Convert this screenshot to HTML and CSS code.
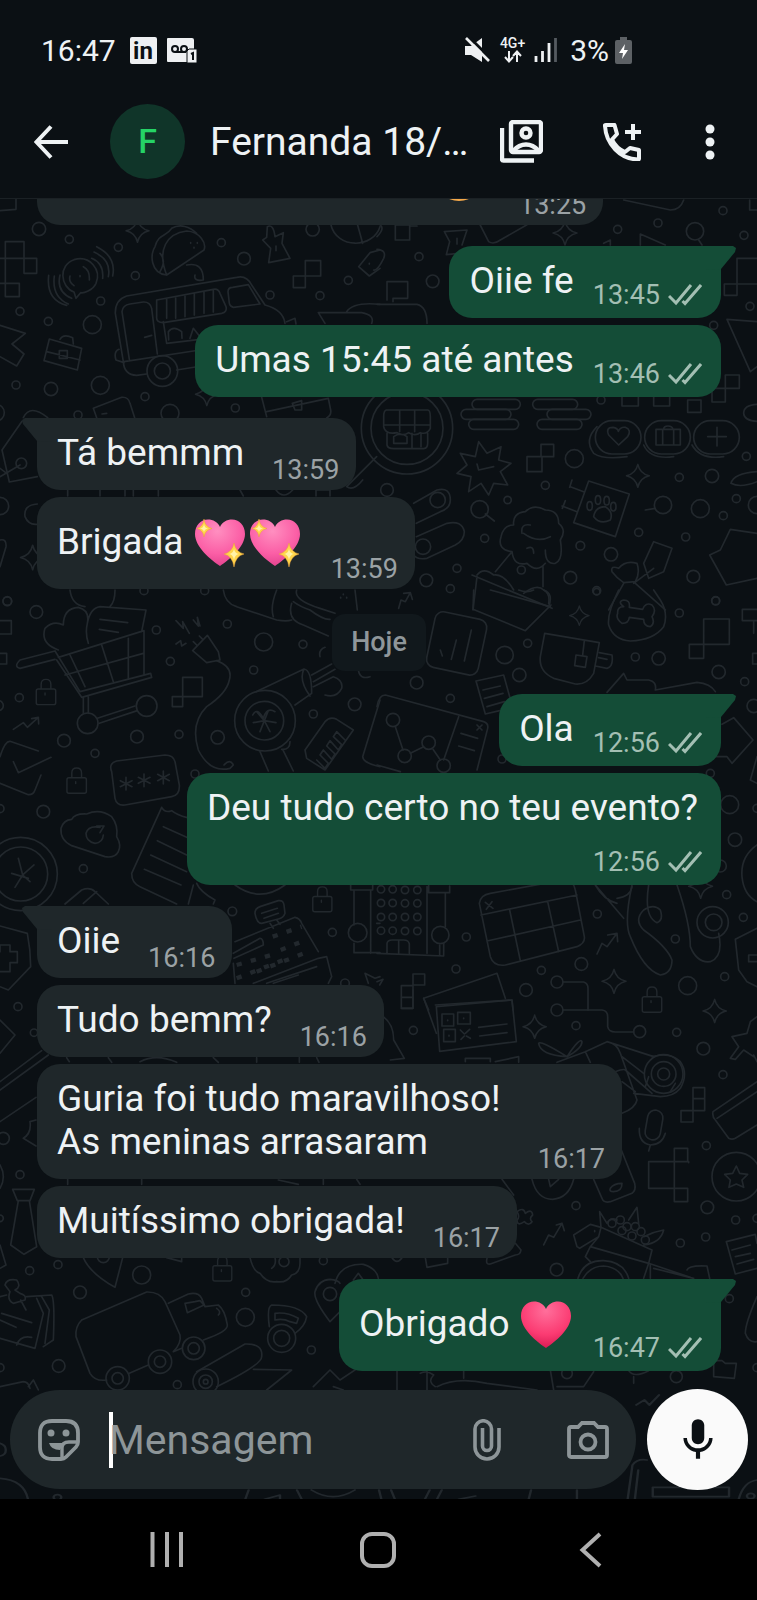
FILE: index.html
```html
<!DOCTYPE html>
<html lang="pt-BR">
<head>
    <meta charset="UTF-8">
    <meta name="viewport" content="width=device-width, initial-scale=1.0">
    <title>Fernanda 18/…</title>
    <link rel="stylesheet" href="styles.css">
</head>
<body>
    <!-- Ícones reutilizados -->
    <svg class="sprite" aria-hidden="true">
        <defs>
            <radialGradient id="pinkFill" cx="45%" cy="25%" r="80%">
                <stop offset="0" stop-color="#ff8fc0"/>
                <stop offset="0.6" stop-color="#fb5fa6"/>
                <stop offset="1" stop-color="#e03f8c"/>
            </radialGradient>
            <radialGradient id="redFill" cx="50%" cy="20%" r="85%">
                <stop offset="0" stop-color="#ff6f9b"/>
                <stop offset="0.6" stop-color="#fb3b72"/>
                <stop offset="1" stop-color="#d3174f"/>
            </radialGradient>
            <symbol id="heart" viewBox="0 0 55 63">
                <path d="M27 56C18 50 2 37 2 24C2 15 8 9.500 15 9.500C20 9.500 25 12 27 17C29 12 34 9.500 39 9.500C46 9.500 52 15 52 24C52 37 36 50 27 56Z"/>
            </symbol>
            <symbol id="sparks" viewBox="0 0 55 63">
                <path fill="#ffd54a" stroke="#e9a13c" stroke-width="0.500" d="M11 9Q12 17 19 18.500Q12 20 11 27Q10 20 4 18.500Q10 17 11 9ZM41 33Q42.500 42 51 44Q42.500 46 41 57Q39.500 46 31 44Q39.500 42 41 33Z"/>
                <path fill="#fff3a8" d="M11 14Q11.500 18 15 18.500Q11.500 19 11 22Q10.500 19 7 18.500Q10.500 18 11 14ZM41 39Q42 43.500 46 44Q42 44.500 41 50Q40 44.500 36 44Q40 43.500 41 39Z"/>
            </symbol>
            <symbol id="checks" viewBox="0 0 34 24">
                <path d="M1 13L8 20L23 2M14.500 18L17 20.500L33 2" fill="none" stroke="currentColor" stroke-width="3"/>
            </symbol>
            <symbol id="star" viewBox="0 0 24 24">
                <path d="M12 1Q14 10 23 12Q14 14 12 23Q10 14 1 12Q10 10 12 1Z"/>
            </symbol>
            <symbol id="lock" viewBox="0 0 24 30">
                <path d="M4 12H20Q22 12 22 14V26Q22 28 20 28H4Q2 28 2 26V14Q2 12 4 12ZM7 12V7Q7 2 12 2T17 7V12M11 16V18"/>
            </symbol>
        </defs>
    </svg>

    <div class="phone">
        <!-- Barra de status -->
        <div class="status-bar">
            <div class="status-left">
                <span class="clock">16:47</span>
                <svg class="badge-icon" viewBox="0 0 27 27" role="img" aria-label="LinkedIn">
                    <rect width="27" height="27" rx="2" fill="#eef0f2"/>
                    <text x="13" y="22" text-anchor="middle" class="in-logo">in</text>
                </svg>
                <svg class="mail-icon" viewBox="0 0 30 27" role="img" aria-label="Correio de voz">
                    <path d="M0 2Q0 1 1 1H25Q27 1 27 3V12H20V25H1Q0 25 0 24Z" fill="#eef0f2"/>
                    <g fill="none" stroke="#0b1014" stroke-width="2">
                        <circle cx="8" cy="12" r="3"/><circle cx="17" cy="12" r="3"/><path d="M8 15H19"/>
                    </g>
                    <path d="M20 14L22 12H30V26H20Z" fill="#eef0f2" stroke="#0b1014"/>
                    <path d="M24 17L26 16V23" fill="none" stroke="#0b1014" stroke-width="2"/>
                </svg>
            </div>
            <div class="status-right">
                <svg class="mute-icon" viewBox="0 0 26 26" aria-hidden="true">
                    <path d="M1 9H7L18 1V25L7 18H1Z" fill="#eef0f2"/>
                    <path d="M4 -1L27 22" stroke="#0b1014" stroke-width="3"/>
                    <path d="M2 1L25 24" stroke="#eef0f2" stroke-width="2.600"/>
                </svg>
                <div class="network">
                    <span>4G+</span>
                    <svg viewBox="0 0 18 13" aria-hidden="true">
                        <path d="M5 1V11M1 7L5 11.500L9 7M13 12V2M9 6L13 1.500L17 6" fill="none" stroke="#eef0f2" stroke-width="2"/>
                    </svg>
                </div>
                <svg class="signal-icon" viewBox="0 0 24 26" aria-hidden="true">
                    <path d="M2 19V25M8.500 14V25M15 6V25" stroke="#eef0f2" stroke-width="2.800"/>
                    <path d="M21.500 1V25" stroke="#555b60" stroke-width="2.800"/>
                </svg>
                <span class="battery-text">3%</span>
                <svg class="battery-icon" viewBox="0 0 17 27" aria-hidden="true">
                    <path d="M5 0H12V3H15Q17 3 17 5V25Q17 27 15 27H2Q0 27 0 25V5Q0 3 2 3H5Z" fill="#5d6165"/>
                    <path d="M10 7L4 16H8L7 22L13 13H9Z" fill="#fff"/>
                </svg>
            </div>
        </div>

        <!-- Cabeçalho da conversa -->
        <header class="chat-header">
            <button class="icon-btn back" aria-label="Voltar">
                <svg viewBox="0 0 34 34"><path d="M34 17H3M17 1.500L2.500 17L17 32.500" fill="none" stroke="currentColor" stroke-width="4"/></svg>
            </button>
            <div class="avatar">F</div>
            <h1 class="contact">Fernanda 18/…</h1>
            <button class="icon-btn gallery" aria-label="Mídia do contato">
                <svg viewBox="0 0 43 43" fill="none" stroke="currentColor" stroke-width="4.400">
                    <rect x="11" y="2" width="30" height="30" rx="2"/>
                    <path d="M2 8V39Q2 40.500 3.500 40.500H34"/>
                    <circle cx="26" cy="13" r="4.500"/>
                    <path d="M13 31Q19 24.500 26 24.500T39 31"/>
                </svg>
            </button>
            <button class="icon-btn call" aria-label="Ligar">
                <svg viewBox="0 0 38 38" fill="none" stroke="currentColor" stroke-width="4" stroke-linejoin="round">
                    <path d="M2 3Q1.500 2 3 2H11.500L14 11L9 16.500Q13 25 22 29L27 25L36 27V35.500Q36 36.500 35 36.500C17 36 3 21 2 3Z"/>
                    <path d="M30 1V17M22 9H38"/>
                </svg>
            </button>
            <button class="icon-btn more" aria-label="Mais opções">
                <svg viewBox="0 0 10 36" fill="currentColor"><circle cx="5" cy="5" r="4.500"/><circle cx="5" cy="18" r="4.500"/><circle cx="5" cy="31" r="4.500"/></svg>
            </button>
        </header>

        <main class="chat">
            <!-- Papel de parede com desenhos -->
            <svg class="wallpaper" viewBox="0 199 757 1300" preserveAspectRatio="xMinYMax slice" aria-hidden="true">
                <g transform="translate(0 190) scale(0.33333)">
                    <path d="M0 62L48 58V20M0 205H110V250H72V155H16V320H58V280H0M72 205V250"/>
                    <circle cx="117" cy="117" r="20"/><circle cx="208" cy="148" r="12"/><circle cx="355" cy="172" r="12"/><circle cx="406" cy="257" r="12"/><circle cx="302" cy="333" r="12"/><circle cx="60" cy="364" r="12"/><circle cx="145" cy="394" r="12"/><circle cx="277" cy="404" r="27"/><circle cx="48" cy="585" r="12"/><circle cx="153" cy="597" r="20"/><circle cx="301" cy="586" r="27"/><circle cx="435" cy="620" r="12"/><circle cx="510" cy="670" r="27"/><circle cx="234" cy="675" r="12"/><circle cx="706" cy="654" r="12"/><circle cx="664" cy="158" r="12"/><circle cx="732" cy="206" r="19"/><circle cx="938" cy="118" r="20"/><circle cx="1045" cy="271" r="12"/><circle cx="960" cy="317" r="12"/><circle cx="810" cy="315" r="12"/><circle cx="-12" cy="668" r="25"/><circle cx="0" cy="948" r="26"/><circle cx="22" cy="1234" r="13"/><circle cx="64" cy="820" r="16"/>
                    <use href="#star" x="375" y="85" width="75" height="75"/><use href="#star" x="583" y="575" width="75" height="75"/><use href="#star" x="58" y="1060" width="80" height="85"/>
                    <path d="M222 306C180 290 175 225 222 209C270 195 305 240 288 280C278 302 250 310 242 308L228 325Z"/>
                    <path d="M210 258Q205 275 222 287M250 230Q270 240 268 270M240 257V260M275 205Q312 220 308 265M282 186Q335 210 325 260M290 170Q350 200 338 258M180 255Q168 305 215 325M163 258Q155 320 205 342M146 256Q138 330 200 346"/>
                    <path d="M500 255C470 180 500 130 560 123C600 125 620 160 612 180ZM500 255C450 250 450 190 465 170C475 130 500 140 515 115C540 100 570 110 590 130M480 190Q500 210 480 245M560 225Q610 215 610 270Q580 275 585 255M572 158V160M582 172V174M592 158V160"/>
                    <path d="M802 110Q820 100 825 140L850 128L846 160L870 205L806 218L812 175L788 150L800 142ZM828 168V182"/>
                    <path d="M916 212H962V258H916ZM880 258H916V293H880ZM992 102C1010 180 1120 175 1140 110M1072 102L1088 160M1140 180L1110 188L1076 230L1108 258L1140 235M1108 220V222"/>
                    <path d="M370 515L346 370Q345 330 380 318L710 262Q740 255 755 285L795 345Q850 360 855 400M370 515Q372 555 410 556L440 552M530 540L605 528M372 515L600 480M388 508L366 365Q368 345 390 342L430 336Q450 335 455 355L472 492M470 330L640 298Q655 295 660 310L678 350Q682 366 665 370L490 398Q468 398 470 380ZM490 395L500 460L600 448M500 325V385M527 320V385M555 315V380M583 311V375M612 305V370M640 300V366M684 305Q684 292 698 292L745 284L780 342L700 352Q690 350 688 340ZM434 442L455 436M506 450L505 425Q520 405 545 425L546 445M570 445L580 415L600 440M357 478Q340 485 348 510L372 518"/>
                    <circle cx="487" cy="543" r="46"/><circle cx="487" cy="543" r="24"/>
                    <path d="M148 447L245 475L232 540L132 512ZM140 485L240 510M180 448Q190 430 218 443L220 462M178 482H202V505H178Z"/>
                    <path d="M0 406L76 430L36 462L72 492L50 528L0 500M955 368H1085Q1125 375 1115 400M955 368L975 400M1040 365Q1060 335 1140 343M860 395L885 385L888 402"/>
                    <path d="M290 683L280 655L365 622Q385 620 390 640L404 683M306 672L320 670M785 622L800 680M800 665L985 625L992 660Q995 675 980 684M877 640L905 632V660H885ZM70 683Q90 640 143 683M66 694L6 780L28 876L112 860M0 860L60 825M0 835L20 850"/>
                    <path d="M112 942Q70 945 75 980Q85 1005 110 1003M0 1050Q20 1045 18 1070L0 1130M203 900V918M300 900V918M375 900V918M400 900V918M475 900V918M720 900L730 918M828 900Q850 930 878 900M948 918V900H990V918M1088 870Q1060 905 1040 890L1130 800"/>
                </g>
                <g transform="translate(377 190) scale(0.33333)">
                    <circle cx="1038" cy="62" r="12"/><circle cx="722" cy="118" r="12"/><circle cx="843" cy="99" r="12"/><circle cx="954" cy="124" r="26"/><circle cx="1101" cy="136" r="12"/><circle cx="126" cy="200" r="12"/><circle cx="167" cy="274" r="19"/><circle cx="1119" cy="349" r="12"/><circle cx="1010" cy="406" r="12"/><circle cx="672" cy="630" r="12"/><circle cx="592" cy="806" r="27"/><circle cx="505" cy="886" r="12"/><circle cx="392" cy="930" r="11"/><circle cx="323" cy="1045" r="12"/><circle cx="610" cy="1067" r="13"/><circle cx="702" cy="1093" r="20"/><circle cx="785" cy="1027" r="12"/><circle cx="907" cy="862" r="12"/><circle cx="1005" cy="858" r="20"/><circle cx="970" cy="956" r="27"/><circle cx="858" cy="945" r="26"/><circle cx="1039" cy="977" r="12"/><circle cx="1078" cy="926" r="12"/><circle cx="1108" cy="799" r="12"/><circle cx="926" cy="1041" r="12"/><circle cx="949" cy="1160" r="19"/><circle cx="580" cy="1163" r="19"/><circle cx="433" cy="1140" r="12"/><circle cx="240" cy="1135" r="12"/><circle cx="148" cy="1171" r="19"/><circle cx="220" cy="1196" r="12"/><circle cx="659" cy="1202" r="12"/><circle cx="1016" cy="1232" r="12"/><circle cx="30" cy="900" r="19"/><circle cx="308" cy="958" r="26"/><circle cx="1140" cy="945" r="26"/>
                    <use href="#star" x="525" y="90" width="78" height="78"/><use href="#star" x="745" y="820" width="75" height="75"/>
                    <path d="M740 30L880 60Q910 60 920 30M1118 30V60H1140M55 105H98V150H55ZM98 150V108H120M0 140Q30 110 0 100M202 125L270 120L255 165M202 125L218 155L208 194L245 190M240 145V162M308 102L335 155Q350 165 370 150L450 104M965 150L975 165M790 165V132L865 165M680 160L700 150V165M0 178Q30 180 20 205Q0 245 -10 240"/>
                    <path d="M30 330V275H92V325H48V335M0 343H120Q150 350 150 400M1140 205H1080V316H1042V282H1140M1140 395L1050 388L1120 545L1140 530M1045 555H1087V595H1045ZM1005 595H1045V636H1005ZM735 620V648H784V620M830 620V648H878V620M932 630H972V667H932ZM1140 643Q1100 645 1100 670Q1102 692 1140 694"/>
                    <circle cx="90" cy="715" r="108"/><circle cx="90" cy="715" r="137"/>
                    <path d="M28 660H152Q160 660 160 680V715Q150 735 130 728Q115 740 95 728Q75 740 60 728Q25 735 20 710V680Q20 662 28 660ZM22 705H160M68 660V725M113 660V725M30 730V765Q32 776 50 776H140Q152 775 152 760V730M105 730V776M132 730V770M50 740Q70 725 90 740V760H50Z"/>
                    <rect x="285" y="628" width="145" height="30" rx="15"/><rect x="252" y="658" width="150" height="30" rx="15"/><rect x="275" y="688" width="150" height="30" rx="15"/><rect x="467" y="628" width="135" height="30" rx="15"/><rect x="510" y="658" width="132" height="30" rx="15"/><rect x="480" y="688" width="135" height="30" rx="15"/>
                    <rect x="655" y="692" width="137" height="100" rx="50"/><rect x="803" y="692" width="137" height="100" rx="50"/><rect x="950" y="692" width="137" height="100" rx="50"/>
                    <path d="M660 710Q620 750 650 790Q680 810 750 800M800 765Q820 810 890 800M945 765Q970 810 1040 800M725 765L695 735Q685 712 708 712Q722 714 724 724Q730 710 745 712Q765 720 752 740ZM837 718H910V765H837ZM857 718V765M890 718V765M860 718Q860 708 873 708T888 718M1020 712V768M992 740H1048"/>
                    <path d="M305 755L330 790L372 770L365 810L402 820L370 845L392 885L350 880L335 915L312 880L275 905L282 860L240 850L270 825L250 790L295 800ZM300 822L305 840L350 830M492 763H530V800H492ZM450 800H495V845H450ZM325 972L352 993"/>
                    <path d="M110 940L180 900Q220 890 220 930Q220 955 190 965L118 1000M118 1040L210 1000Q255 990 262 1025Q262 1050 235 1065L150 1105Q120 1110 110 1095"/><circle cx="182" cy="930" r="23"/><circle cx="138" cy="1070" r="23"/>
                    <path d="M635 873L757 912L715 1040L590 998ZM580 890L620 905M585 870L578 892M555 948L600 965M565 932L556 955M650 980Q655 950 685 950Q710 965 700 990Q670 1005 650 980Z"/>
                    <ellipse cx="638" cy="948" rx="8" ry="13"/><ellipse cx="663" cy="930" rx="8" ry="13"/><ellipse cx="689" cy="932" rx="8" ry="13"/><ellipse cx="709" cy="950" rx="8" ry="13"/>
                    <path d="M405 1085Q360 1080 372 1040Q380 1005 410 1005Q405 970 445 965Q470 940 505 960Q545 960 545 1000Q570 1020 550 1050Q560 1110 535 1120Q505 1125 505 1080M405 1085Q410 1130 450 1120Q480 1150 505 1120M435 1030Q430 1000 460 1005M440 1030Q480 1060 520 1040M450 1075Q470 1065 470 1090M405 1085L355 1145M498 1130V1190"/>
                    <path d="M285 1155L525 1255M300 1160L288 1260M300 1155Q320 1130 350 1155Q380 1150 410 1200M440 1210Q480 1180 500 1200Q530 1210 515 1250M805 960L835 955M830 1055L885 1075L860 1145L815 1165L800 1120ZM770 1180L830 1135M705 1145Q700 1125 725 1135Q745 1110 780 1120Q790 1150 775 1175L740 1178Q720 1165 705 1145ZM740 1180L695 1260M775 1180L865 1260M1140 1030L1060 1018L1030 1080L998 1095L1048 1185L1140 1165M1140 845Q1070 850 1062 880Q1090 895 1140 875M65 1255L72 1230L85 1235L100 1208M80 1210L100 1208L106 1228"/>
                </g>
                <g transform="translate(0 590) scale(0.33333)">
                    <circle cx="22" cy="33" r="13"/><circle cx="109" cy="66" r="19"/><circle cx="469" cy="120" r="12"/><circle cx="511" cy="214" r="12"/><circle cx="58" cy="323" r="12"/><circle cx="192" cy="452" r="19"/><circle cx="411" cy="440" r="19"/><circle cx="537" cy="433" r="12"/><circle cx="653" cy="442" r="20"/><circle cx="285" cy="490" r="12"/><circle cx="130" cy="665" r="19"/><circle cx="250" cy="836" r="12"/><circle cx="682" cy="102" r="12"/><circle cx="791" cy="156" r="27"/><circle cx="909" cy="163" r="12"/><circle cx="761" cy="240" r="12"/><circle cx="940" cy="372" r="12"/><circle cx="1064" cy="343" r="19"/><circle cx="697" cy="964" r="13"/><circle cx="997" cy="1027" r="12"/><circle cx="54" cy="1250" r="12"/><circle cx="-5" cy="347" r="15"/><circle cx="585" cy="552" r="12"/><circle cx="0" cy="656" r="12"/><circle cx="432" cy="2" r="12"/><circle cx="614" cy="2" r="12"/>
                    <path d="M0 92H34V132H0M0 190H20V222H0M210 0Q215 45 255 50M345 0Q345 35 330 50M175 180Q120 160 135 115Q160 90 190 105Q190 55 235 52Q270 60 262 100M262 100Q270 55 300 50L438 60L425 125M262 100Q255 130 265 160M300 88L383 98M298 118L355 127M165 183L60 210Q40 230 60 235L165 208M165 183L240 305L452 250L455 262L245 322L170 210M175 202L432 122V255M210 195L255 290M305 165L340 275M385 145V265M195 255L430 190M250 322V370M265 320V370M292 385L405 348M298 400L412 362"/>
                    <circle cx="263" cy="400" r="31"/><circle cx="440" cy="348" r="31"/>
                    <use href="#lock" x="103" y="262" width="70" height="88"/><use href="#lock" x="195" y="528" width="70" height="88"/><use href="#lock" x="932" y="885" width="70" height="86"/>
                    <path d="M40 418L70 398L82 412L115 382M95 386L115 382L116 402M115 483L30 454Q15 452 0 500M40 515L55 548L153 502M0 580L85 614Q100 615 105 600L123 555M528 92L550 115L548 95L568 130M580 90L595 108L592 82L600 108M528 162L542 152L545 168L558 160M622 136L655 185L660 210L620 218L578 182ZM580 155L590 165M598 138L606 146M650 212Q700 230 688 270Q680 310 620 350Q570 400 595 480Q630 550 690 535M672 525Q690 505 700 525L690 535"/>
                    <path d="M548 262H607V320H548ZM517 320H548V350H517ZM670 0Q675 40 710 50L830 90Q860 95 875 90M830 0Q810 50 820 80M890 0Q880 30 960 55L1005 70M875 40Q860 90 910 105L985 138M880 35Q900 50 930 60Q970 90 990 88M1030 12V14M1022 22V24M1040 22V24M1065 0L1072 60M975 172Q955 180 960 200"/>
                    <circle cx="795" cy="392" r="91"/><circle cx="793" cy="392" r="58"/>
                    <path d="M768 305L912 237Q935 240 935 310L885 345M912 237Q895 270 930 318M780 485L805 543M848 478L880 543M845 478Q870 480 870 455M793 392L770 365M793 392L760 398M793 392L780 425M793 392L810 425M793 392L828 398M793 392L805 362M758 375Q770 350 790 385Q800 350 825 365M935 255L995 222M940 275L1005 238M940 290L1000 260Q1030 270 1025 295Q1010 325 975 315M1075 240Q1080 270 1110 260"/>
                    <path d="M335 545Q325 520 350 513L495 495Q520 495 525 515L538 585Q540 615 515 620L375 645Q350 648 345 625ZM378 562V600M361 572L396 590M361 590L396 572M432 552V590M415 562L450 580M415 580L450 562M490 543V582M473 553L508 572M473 572L508 553M915 480L975 395Q990 378 1010 388L1060 420L975 540L920 505ZM950 510L975 535L985 520L960 495L970 480L995 508L1005 492L980 468L990 452L1015 480L1025 464L1000 440L1010 425L1035 450"/>
                    <path d="M1140 330L1088 500Q1090 520 1140 530"/>
                    <path d="M215 767Q180 750 183 715Q190 690 215 688Q225 670 260 672Q300 655 335 680Q355 705 350 740Q365 765 355 785Q345 805 315 800ZM310 735Q308 758 285 760Q258 755 258 730Q265 705 300 712M300 728L312 708L290 708M485 652Q495 670 515 662Q530 675 562 683M485 652L395 850Q395 880 420 890L530 942M490 710L560 742M472 752L560 795M452 795L560 845M433 838L543 885M580 885L565 942M590 880Q600 905 645 930L640 942"/>
                    <circle cx="62" cy="852" r="110"/><circle cx="62" cy="852" r="81"/>
                    <path d="M55 805L68 855L45 892M102 825L68 855L90 875M35 850L85 865M195 942L245 900Q270 890 285 905L325 942M250 940L290 905M0 1008L82 1030Q92 1080 92 1130L25 1200L0 1190M0 1085V1065H30V1085H52V1118H30V1145H0M705 885Q780 940 855 885"/>
                    <path d="M765 970Q765 955 780 950L835 932Q850 930 852 945L855 970Q850 985 835 987L785 1000Q770 1000 765 970ZM785 970L832 955M792 985L835 970M810 1000L820 1015M830 990L840 1003M705 1055L885 982Q900 985 905 1000L955 1085M700 1090L780 1045Q790 1045 790 1065L702 1105M705 1180L700 1120M955 1105L980 1100L995 1160L985 1180M760 1180L955 1105M800 1180L950 1130M820 1180L895 1155"/>
                    <path class="dashed" d="M818 1040L905 1010M842 1080L905 1055M710 1125L832 1090M710 1165L850 1110M770 1145L925 1085"/>
                    <path d="M1052 885V900H1118V885M1062 900V1005M1112 900V1090M1062 1060V1088H1140M1140 1000H1130M1095 1150L1125 1165L1140 1160M1095 1150L1105 1180"/><circle cx="1073" cy="1028" r="28"/><circle cx="1035" cy="1180" r="13"/>
                </g>
                <g transform="translate(377 590) scale(0.33333)">
                    <circle cx="452" cy="160" r="12"/><circle cx="383" cy="195" r="26"/><circle cx="427" cy="255" r="20"/><circle cx="119" cy="278" r="19"/><circle cx="220" cy="325" r="12"/><circle cx="775" cy="201" r="12"/><circle cx="845" cy="205" r="20"/><circle cx="907" cy="69" r="12"/><circle cx="1016" cy="33" r="12"/><circle cx="1025" cy="246" r="20"/><circle cx="1103" cy="275" r="12"/><circle cx="1130" cy="348" r="20"/><circle cx="375" cy="507" r="12"/><circle cx="1058" cy="644" r="27"/><circle cx="1074" cy="749" r="20"/><circle cx="1000" cy="550" r="12"/><circle cx="1030" cy="828" r="18"/><circle cx="1140" cy="655" r="12"/><circle cx="1049" cy="914" r="12"/><circle cx="1099" cy="982" r="12"/><circle cx="661" cy="972" r="12"/><circle cx="895" cy="1047" r="12"/><circle cx="268" cy="1041" r="12"/><circle cx="237" cy="1137" r="12"/><circle cx="493" cy="1141" r="12"/><circle cx="613" cy="1122" r="19"/><circle cx="447" cy="1200" r="19"/><circle cx="932" cy="1187" r="27"/><circle cx="1043" cy="1160" r="12"/><circle cx="540" cy="1176" r="18"/><circle cx="659" cy="5" r="10"/>
                    <use href="#star" x="575" y="45" width="64" height="64"/><use href="#star" x="932" y="850" width="78" height="78"/><use href="#star" x="672" y="1135" width="78" height="78"/>
                    <path d="M290 0L288 58L445 122L522 45M340 0L520 50M425 0Q450 10 470 0M500 0Q520 10 515 40"/>
                    <rect x="160" y="75" width="158" height="170" rx="25" transform="rotate(12 238 160)"/>
                    <path d="M190 180L196 198M238 150L223 208M283 120L262 213M725 0Q690 70 695 105Q710 150 760 153Q830 150 860 110Q875 70 850 30L830 0M740 50Q720 50 722 70Q715 85 735 100Q755 100 757 82L800 88Q800 110 820 110Q835 100 825 80Q840 60 825 45Q805 35 797 58L757 52Q760 30 740 30Q720 35 740 50Z"/>
                    <path d="M503 130L667 158L650 250Q630 285 595 282L530 265Q485 245 490 200ZM622 152L617 195M597 195L630 200L625 232L593 227ZM667 188L705 195Q710 230 690 235L655 228M665 203L690 208M980 87H1057V163H980ZM937 163H980V205H937ZM1140 58H1096V92H1140M1130 92V130M1140 190H1127V222H1140"/>
                    <path d="M0 350Q5 315 25 315L320 395Q335 400 332 415L300 540M245 380L200 510M300 405L315 420M315 405L300 420M252 430L302 445M245 468L292 482M0 525L70 545M55 410L78 480M100 490L140 470M168 478L190 510"/><circle cx="48" cy="390" r="20"/><circle cx="83" cy="498" r="20"/><circle cx="155" cy="458" r="20"/><circle cx="200" cy="527" r="20"/>
                    <path d="M297 273L380 255L405 345M297 273L325 372L368 362M318 300L370 288M322 325L378 310M330 350L382 335M690 307L740 250L750 270H815Q840 275 835 300M835 300L960 277Q1000 280 1015 305M1035 403L1070 383L1128 450L1065 520L1050 500H1015M1140 500L1120 570L1140 580"/>
                    <path d="M0 1090L200 1098V1060M150 890V1090M155 885V908H218V888M205 910V1010M188 1065V1095M30 1088V1060Q32 1050 45 1050H80Q95 1050 97 1062V1090M65 1052V1088"/>
                    <circle cx="190" cy="1035" r="26"/><circle cx="12" cy="898" r="11"/><circle cx="47" cy="898" r="11"/><circle cx="84" cy="900" r="11"/><circle cx="121" cy="900" r="11"/><circle cx="12" cy="939" r="11"/><circle cx="47" cy="939" r="11"/><circle cx="84" cy="940" r="11"/><circle cx="121" cy="940" r="11"/><circle cx="12" cy="981" r="11"/><circle cx="47" cy="981" r="11"/><circle cx="84" cy="981" r="11"/><circle cx="121" cy="981" r="11"/><circle cx="12" cy="1022" r="11"/><circle cx="47" cy="1022" r="11"/><circle cx="84" cy="1023" r="11"/><circle cx="121" cy="1023" r="11"/>
                    <path d="M307 940Q310 915 340 910L560 870Q590 870 595 900L622 1040Q625 1060 600 1070L385 1125Q350 1130 340 1100ZM312 975L600 915M330 1053L610 990M398 960L430 1112M512 935L545 1085M325 937L348 955M345 935L328 958M655 885Q680 930 720 940M655 885L740 985M765 885Q740 1000 760 1040Q800 1140 850 1155Q885 1150 885 1110Q870 1070 800 1020Q770 990 800 960Q830 940 850 960Q860 990 840 998Q800 980 815 885M900 885Q940 1000 940 1070Q960 1120 1000 1115Q1040 1100 1025 1030M660 1092L675 1060L690 1070L720 1030M692 1035L720 1030L722 1055"/>
                    <circle cx="1007" cy="997" r="47"/><circle cx="1010" cy="997" r="25"/>
                    <path d="M720 925Q760 920 765 890M1140 765Q1090 800 1095 860Q1100 915 1140 935M1140 1015L1075 1048L1085 1140L1110 1175L1140 1190M1140 1095H1115V1115H1140M108 1152H143V1185H108ZM73 1187H108V1255H73ZM73 1222H108M140 1225L360 1150L385 1225M140 1225L155 1260M175 1245L405 1230L408 1260M558 1176H620Q633 1180 633 1195V1260M0 1175L18 1168L8 1185"/>
                </g>
                <g transform="translate(0 990) scale(0.33333)">
                    <circle cx="10" cy="445" r="18"/><circle cx="60" cy="554" r="12"/><circle cx="174" cy="824" r="12"/><circle cx="89" cy="842" r="12"/><circle cx="240" cy="907" r="19"/><circle cx="425" cy="855" r="27"/><circle cx="176" cy="1128" r="19"/><circle cx="737" cy="907" r="12"/><circle cx="736" cy="982" r="27"/><circle cx="934" cy="1080" r="12"/><circle cx="970" cy="812" r="12"/><circle cx="532" cy="1184" r="12"/><circle cx="0" cy="1133" r="12"/><circle cx="102" cy="128" r="11"/><circle cx="0" cy="685" r="10"/><circle cx="310" cy="800" r="18"/>
                    <path d="M0 90L45 135L0 190M0 275L125 182M0 300L145 195M0 395L108 322M108 390L90 395Q95 430 70 445L108 468M0 525Q20 560 0 595M38 598H103L90 632H52ZM55 632L32 765L72 793L110 770L88 632M0 765L18 825L0 835M250 803Q270 850 345 892L368 803M15 885Q20 865 50 870Q65 890 45 900L60 910Q80 915 75 930L40 940Q20 930 30 905ZM62 930L78 960M80 920L155 915Q165 930 160 1050L130 1070M0 920L20 915M110 925L130 970L105 1075L0 1045M125 920L148 960L135 1060M5 970L95 998M0 990L48 1012M50 1065Q60 1035 95 1042"/>
                    <path d="M200 203L208 215M325 203L335 217M420 215Q470 190 530 217M640 203L655 217M770 203V217M898 203V217M950 203L957 217M203 568V583M425 568V583M835 570L895 583M970 568V583M1070 568L1080 583M500 803L545 815V803"/>
                    <use href="#lock" x="633" y="792" width="68" height="88"/>
                    <path d="M750 803Q760 845 780 850Q800 880 830 875Q860 880 875 855Q900 850 900 820V803M815 835Q830 825 825 803"/><circle cx="852" cy="815" r="15"/>
                    <path d="M245 990Q225 1010 228 1040L270 1150Q285 1175 320 1170M245 990L440 906Q480 905 495 935L540 1035Q545 1060 520 1085M505 940L565 912Q595 905 605 925L615 950L655 945Q675 960 682 1005Q685 1025 610 1050M555 940L585 935L600 932L612 945L562 968ZM388 1150L445 1125M650 955Q665 965 655 975M520 1085L545 1075"/>
                    <circle cx="353" cy="1165" r="35"/><circle cx="353" cy="1165" r="17"/><circle cx="480" cy="1115" r="35"/><circle cx="480" cy="1115" r="17"/><circle cx="581" cy="1075" r="34"/><circle cx="581" cy="1075" r="17"/><circle cx="617" cy="1175" r="38"/><circle cx="617" cy="1175" r="20"/><circle cx="617" cy="1175" r="7"/><circle cx="845" cy="1045" r="42"/><circle cx="845" cy="1045" r="24"/>
                    <path d="M590 1145L735 1062Q790 1060 785 1100Q785 1125 650 1190M760 1138L875 1140L800 1200M808 1010Q800 950 815 945Q900 945 920 980Q915 1010 885 1030M825 970Q860 965 895 985L890 1000L870 995Q850 985 825 990ZM990 995Q940 930 945 905Q955 870 990 868Q1015 870 1020 880M990 995L1020 965M940 1190L990 1140L1020 1170L1080 1130M1000 1190L1030 1200M1005 880Q1020 820 1090 823Q1130 835 1135 865M1060 870L1075 850L1088 868"/><circle cx="990" cy="912" r="20"/>
                    <path d="M0 1190L70 1175Q85 1175 90 1195M85 1190L100 1170L115 1200"/>
                </g>
                <g transform="translate(377 990) scale(0.33333)">
                    <circle cx="109" cy="121" r="12"/><circle cx="597" cy="107" r="12"/><circle cx="540" cy="60" r="18"/><circle cx="788" cy="125" r="18"/><circle cx="899" cy="127" r="12"/><circle cx="979" cy="176" r="19"/><circle cx="1038" cy="254" r="12"/><circle cx="988" cy="467" r="12"/><circle cx="991" cy="652" r="19"/><circle cx="1076" cy="690" r="12"/><circle cx="986" cy="741" r="12"/><circle cx="910" cy="759" r="12"/><circle cx="597" cy="647" r="12"/><circle cx="539" cy="839" r="19"/><circle cx="1057" cy="926" r="12"/><circle cx="898" cy="1160" r="18"/><circle cx="1140" cy="685" r="12"/><circle cx="1140" cy="1133" r="12"/>
                    <use href="#star" x="435" y="72" width="76" height="76"/><use href="#star" x="975" y="25" width="76" height="76"/><use href="#lock" x="790" y="-15" width="70" height="88"/>
                    <path d="M178 50L405 30L418 155L188 184ZM140 25L178 130M195 72H230V108H195ZM242 67H280V102H242ZM200 118H235V155H200ZM212 90V92M260 84V86M216 136V138M305 112L390 102M308 138L390 128M250 120L262 132M278 118L265 130M252 148L262 138M280 145L268 138M0 70Q50 90 50 150L82 205L40 210M73 55H108V0M558 60H675Q692 62 692 80V110Q695 126 715 126H770M265 215V205H340V215M355 215L425 200V217"/>
                    <path d="M485 160Q490 150 570 200Q610 140 615 155Q615 175 570 200Q490 195 485 160ZM540 217L625 185L690 155Q720 160 730 190L780 330Q775 355 735 370M625 185L640 217M690 155L830 200M735 200L800 250M715 245Q740 235 745 240L825 310M825 200Q880 185 910 215Q935 250 910 295Q890 320 850 320L770 310M735 275L775 305M805 290L815 260M880 305L895 280"/>
                    <circle cx="860" cy="252" r="58"/><circle cx="860" cy="252" r="37"/><circle cx="860" cy="252" r="18"/>
                    <path d="M948 293H983V362H948ZM948 326H983M912 362H948V396H912ZM1140 275L1008 365Q1005 380 1015 390L1055 445Q1065 450 1075 445L1140 405M1020 385L1140 305M1140 80L1120 95L1110 130L1065 140L1085 170L1060 205L1075 208L1100 180L1130 200M1140 215L1130 195"/>
                    <rect x="808" y="360" width="46" height="90" rx="23" transform="rotate(10 831 405)"/><path d="M787 415Q785 460 820 465Q855 465 865 430M820 465L815 483M815 515H932V475H892V635H932V595H815ZM935 515V518M733 480L773 580Q778 600 765 610L700 635Q680 640 675 625L650 568M700 595Q710 580 735 580Q735 605 710 605Q695 605 700 595Z"/>
                    <circle cx="1078" cy="560" r="73"/><path d="M1078 528L1088 550L1112 553L1095 570L1100 592L1078 582L1056 592L1060 570L1043 553L1067 550Z"/>
                    <path d="M465 568Q480 628 527 628Q575 625 590 568M515 568L520 590L545 568M375 568L410 615M420 665Q440 650 445 670Q465 655 467 675Q455 685 465 695Q455 710 442 695Q420 710 420 690Q430 680 420 665ZM500 765L515 735L530 742L555 700M538 705L555 700L562 722M415 760L432 780Q430 795 415 795L340 822Q325 825 330 805M145 803L150 832L212 820V803M45 803Q60 825 75 803"/>
                    <path d="M600 770L590 735L640 703L672 712L665 740L608 775ZM672 712L825 780L815 820L640 770L665 740M640 770L625 800L640 815M672 712L668 665L690 700M690 700Q700 680 720 690M755 690L780 652L785 700M800 740Q830 725 860 720Q850 760 800 765M653 722V725M815 820L800 865M820 825V865M830 835L950 865M930 840Q935 825 990 828L998 865M815 820L940 862"/>
                    <circle cx="705" cy="700" r="12"/><circle cx="730" cy="690" r="12"/><circle cx="750" cy="710" r="12"/><circle cx="775" cy="710" r="12"/><circle cx="735" cy="722" r="12"/><circle cx="765" cy="738" r="12"/><circle cx="792" cy="725" r="12"/><circle cx="805" cy="750" r="12"/>
                    <path d="M603 865Q620 810 680 812Q740 815 755 865M618 865Q640 828 680 828Q725 832 738 865M1048 755L1135 733L1140 760M1048 755L1075 852L1140 835M1065 780L1120 765M1075 800L1120 790M1080 822L1130 808M1140 920Q1105 1000 1105 1030Q1115 1060 1140 1055M1010 1112H1035L1045 1120H1078L1072 1165L1010 1160ZM755 1142Q770 1165 815 1142M770 1160V1180M60 1140V1200M260 1140V1165M520 1140L530 1200M180 1190Q240 1160 330 1180L480 1200M650 1145L620 1190H540M130 1150Q150 1140 170 1155Q150 1175 175 1190M150 1140V1200"/><circle cx="570" cy="1150" r="16"/>
                </g>
                <g transform="translate(0 1370) scale(0.48280 0.33333)">
                    <path d="M0 325Q50 330 58 388M508 388L515 360M548 388L580 375V388M615 360L625 388M645 360Q690 400 735 360M785 360L790 388M810 360L818 388M880 388L890 360M905 388L915 360M950 388L985 378M1095 388L1100 360M1195 388V360M1300 388L1310 285Q1320 265 1340 270M1315 388L1322 300M1318 105L1335 90L1345 105L1365 75M1530 388Q1540 335 1568 330M0 220Q12 225 12 240T0 258M1352 352H1510V380H1352Z"/><circle cx="119" cy="382" r="8"/><circle cx="1555" cy="378" r="8"/>
                </g>
            </svg>

            <div class="messages">
                <div class="bubble in clipped">
                    <span class="clipped-text">
                        <svg class="smile" viewBox="0 0 55 63" role="img" aria-label="emoji"><circle cx="23" cy="30" r="24" fill="#f5a94a"/></svg>
                    </span>
                    <time>13:25</time>
                </div>

                <div class="bubble out tail group">
                    <p>Oiie fe</p>
                    <time>13:45 <svg class="checks"><use href="#checks"/></svg></time>
                </div>
                <div class="bubble out">
                    <p>Umas 15:45 até antes</p>
                    <time>13:46 <svg class="checks"><use href="#checks"/></svg></time>
                </div>

                <div class="bubble in tail group">
                    <p>Tá bemmm</p>
                    <time>13:59</time>
                </div>
                <div class="bubble in">
                    <p>Brigada <svg class="emoji" role="img" aria-label="coração brilhante"><use href="#heart" fill="url(#pinkFill)"/><use href="#sparks"/></svg><svg class="emoji" role="img" aria-label="coração brilhante"><use href="#heart" fill="url(#pinkFill)"/><use href="#sparks"/></svg></p>
                    <time>13:59</time>
                </div>

                <div class="day">Hoje</div>

                <div class="bubble out tail group">
                    <p>Ola</p>
                    <time>12:56 <svg class="checks"><use href="#checks"/></svg></time>
                </div>
                <div class="bubble out stacked">
                    <p>Deu tudo certo no teu evento?</p>
                    <time>12:56 <svg class="checks"><use href="#checks"/></svg></time>
                </div>

                <div class="bubble in tail group">
                    <p>Oiie</p>
                    <time>16:16</time>
                </div>
                <div class="bubble in">
                    <p>Tudo bemm?</p>
                    <time>16:16</time>
                </div>
                <div class="bubble in">
                    <p>Guria foi tudo maravilhoso!&nbsp;<br>As meninas arrasaram</p>
                    <time>16:17</time>
                </div>
                <div class="bubble in">
                    <p>Muitíssimo obrigada!</p>
                    <time>16:17</time>
                </div>

                <div class="bubble out tail group">
                    <p>Obrigado <svg class="emoji" role="img" aria-label="coração"><use href="#heart" fill="url(#redFill)"/></svg></p>
                    <time>16:47 <svg class="checks"><use href="#checks"/></svg></time>
                </div>
            </div>

            <!-- Campo de mensagem -->
            <form class="composer">
                <div class="composer-box">
                    <button type="button" class="icon-btn sticker" aria-label="Figurinhas">
                        <svg viewBox="0 0 42 42" fill="none" stroke="currentColor" stroke-width="3.800">
                            <path d="M14 2H28Q40 2 40 14V23Q40 26 38 28L28 38Q26 40 23 40H14Q2 40 2 28V14Q2 2 14 2Z"/>
                            <path d="M24 39V29Q24 23 31 23H39" stroke-width="3.400"/>
                            <path d="M11 24H26L22 31Q13 31 11 24Z" fill="currentColor" stroke="none"/>
                            <circle cx="13" cy="14" r="3.500" fill="currentColor" stroke="none"/>
                            <circle cx="28" cy="14" r="3.500" fill="currentColor" stroke="none"/>
                        </svg>
                    </button>
                    <input type="text" class="message-input" placeholder="Mensagem" aria-label="Mensagem">
                    <button type="button" class="icon-btn clip" aria-label="Anexar">
                        <svg viewBox="0 0 28 42" fill="none" stroke="currentColor" stroke-width="3.600">
                            <path d="M26 9V28A12 12 0 0 1 2 28V10A8 8 0 0 1 18.500 10V27A4.500 4.500 0 0 1 9.500 27V9"/>
                        </svg>
                    </button>
                    <button type="button" class="icon-btn camera" aria-label="Câmera">
                        <svg viewBox="0 0 42 38" fill="none" stroke="currentColor" stroke-width="3.800">
                            <path d="M4 6H11L15 2H27L31 6H38Q40 6 40 8V34Q40 36 38 36H4Q2 36 2 34V8Q2 6 4 6Z"/>
                            <circle cx="21" cy="21" r="7.500"/>
                        </svg>
                    </button>
                </div>
                <button type="button" class="mic" aria-label="Gravar áudio">
                    <svg viewBox="0 0 24 24" fill="currentColor">
                        <path d="M12 14c1.660 0 3-1.340 3-3V5c0-1.660-1.340-3-3-3S9 3.340 9 5v6c0 1.660 1.340 3 3 3z"/>
                        <path d="M17.300 11c0 2.760-2.400 5-5.300 5s-5.300-2.240-5.300-5H5c0 3.410 2.720 6.230 6 6.720V21h2v-3.280c3.280-.480 6-3.300 6-6.720h-1.700z"/>
                    </svg>
                </button>
            </form>
        </main>

        <!-- Navegação do sistema -->
        <nav class="system-nav">
            <button aria-label="Recentes">
                <svg viewBox="0 0 36 36" fill="none" stroke="currentColor" stroke-width="4"><path d="M3.500 0V35M18 0V35M32 0V35"/></svg>
            </button>
            <button aria-label="Início">
                <svg viewBox="0 0 36 36" fill="none" stroke="currentColor" stroke-width="4"><rect x="2" y="2" width="32" height="32" rx="10"/></svg>
            </button>
            <button aria-label="Voltar">
                <svg viewBox="0 0 36 36" fill="none" stroke="currentColor" stroke-width="4"><path d="M28 2L10.500 18L28 34"/></svg>
            </button>
        </nav>
    </div>
</body>
</html>
```

FILE: styles.css
```css
/* Reset */
* {
    margin: 0;
    padding: 0;
    box-sizing: border-box;
}

body, html {
    height: 100%;
}

body {
    background: #0b1014;
    color: #eef2f4;
    font-family: Roboto, "Liberation Sans", sans-serif;
}

button {
    background: none;
    border: none;
    color: inherit;
    font: inherit;
    cursor: pointer;
}

svg {
    display: block;
}

.sprite {
    position: absolute;
    width: 0;
    height: 0;
}

.phone {
    display: flex;
    flex-direction: column;
    height: 100%;
}

/* Barra de status */
.status-bar {
    display: flex;
    justify-content: space-between;
    align-items: center;
    flex: none;
    height: 85px;
    padding: 15px 125px 0 41px;
    font-size: 30px;
}

.status-left,
.status-right {
    display: flex;
    align-items: center;
}

.badge-icon {
    width: 27px;
    height: 27px;
    margin-left: 14px;
}

.in-logo {
    font-size: 24px;
    font-weight: 700;
    fill: #0b1014;
}

.mail-icon {
    width: 30px;
    height: 27px;
    margin-left: 10px;
}

.mute-icon {
    width: 26px;
    height: 26px;
}

.network {
    margin-left: 10px;
    font-size: 14px;
    line-height: 13px;
    font-weight: 500;
}

.network svg {
    width: 18px;
    height: 13px;
    margin: 0 auto;
}

.signal-icon {
    width: 24px;
    height: 26px;
    margin-left: 9px;
}

.battery-text {
    margin-left: 12px;
}

.battery-icon {
    width: 17px;
    height: 27px;
    margin-left: 6px;
}

/* Cabeçalho */
.chat-header {
    display: flex;
    align-items: center;
    flex: none;
    height: 114px;
    padding: 0 42px 0 34px;
    border-bottom: 1px solid #1b2125;
}

.icon-btn {
    flex: none;
}

.back svg {
    width: 34px;
    height: 34px;
}

.avatar {
    flex: none;
    width: 75px;
    height: 75px;
    margin-left: 42px;
    border-radius: 50%;
    background: #103529;
    color: #25d366;
    font-size: 34px;
    line-height: 75px;
    font-weight: 500;
    text-align: center;
}

.contact {
    flex: 1;
    min-width: 0;
    margin-left: 25px;
    overflow: hidden;
    font-size: 39px;
    line-height: 48px;
    font-weight: 400;
    white-space: nowrap;
    text-overflow: ellipsis;
}

.gallery svg {
    width: 43px;
    height: 43px;
}

.call {
    margin-left: 60px;
}

.call svg {
    width: 38px;
    height: 38px;
}

.more {
    margin-left: 64px;
}

.more svg {
    width: 10px;
    height: 36px;
}

/* Área da conversa */
.chat {
    position: relative;
    display: flex;
    flex-direction: column;
    flex: 1;
    min-height: 0;
    overflow: hidden;
}

.wallpaper {
    position: absolute;
    top: 0;
    left: 0;
    width: 100%;
    height: 100%;
    fill: none;
    stroke: #22282d;
    stroke-width: 5;
    stroke-linejoin: round;
    stroke-linecap: round;
}

.wallpaper use {
    stroke-width: 1.5;
}

.wallpaper .dashed {
    stroke-width: 13;
    stroke-dasharray: 16 28;
    stroke-linecap: butt;
}

.messages {
    position: relative;
    display: flex;
    flex-direction: column;
    justify-content: flex-end;
    gap: 7px;
    flex: 1;
    min-height: 0;
    padding: 0 36px 18px 37px;
}

.bubble {
    position: relative;
    display: flex;
    align-items: flex-end;
    flex: none;
    padding: 13px 17px 0 20px;
    border-radius: 23px;
    font-size: 37px;
    line-height: 43px;
}

.bubble p {
    padding-bottom: 16px;
}

.bubble.in {
    align-self: flex-start;
    gap: 28px;
    background: #1f272a;
}

.bubble.out {
    align-self: flex-end;
    gap: 19px;
    padding-right: 19px;
    background: #144d37;
}

.bubble.group {
    margin-top: 14px;
}

.bubble.out.stacked {
    flex-direction: column;
    gap: 0;
}

.bubble time {
    display: flex;
    align-items: center;
    gap: 8px;
    padding-bottom: 4px;
    color: #9ba2a5;
    font-size: 27px;
    line-height: 32px;
}

.bubble.out time {
    padding-bottom: 7px;
    color: #a3bfb3;
}

.bubble.stacked p {
    padding-right: 4px;
    padding-bottom: 17px;
}

.checks {
    width: 34px;
    height: 24px;
}

/* Ponta do balão */
.tail::before {
    content: "";
    position: absolute;
    top: 0;
    width: 30px;
    height: 24px;
}

.tail.out {
    border-top-right-radius: 0;
}

.tail.out::before {
    right: -15px;
    background: #144d37;
    clip-path: polygon(0 0, 27px 0, 30px 2px, 29px 6px, 15px 23px, 0 24px);
}

.tail.in {
    border-top-left-radius: 0;
}

.tail.in::before {
    left: -15px;
    background: #1f272a;
    clip-path: polygon(30px 0, 3px 0, 0 2px, 1px 6px, 15px 23px, 30px 24px);
}

.emoji {
    display: inline-block;
    width: 55px;
    height: 63px;
    vertical-align: -19px;
}

.bubble.clipped {
    height: 92px;
}

.clipped-text {
    display: flex;
    justify-content: flex-end;
    width: 434px;
    padding-bottom: 15px;
}

.smile {
    width: 55px;
    height: 63px;
}

.day {
    align-self: center;
    flex: none;
    margin-top: 18px;
    margin-bottom: 2px;
    padding: 0 19px;
    border-radius: 13px;
    background: #11181c;
    color: #8f969a;
    font-size: 27px;
    line-height: 57px;
    font-weight: 500;
}

/* Campo de mensagem */
.composer {
    position: relative;
    display: flex;
    align-items: center;
    gap: 11px;
    flex: none;
    padding: 0 9px 9px 10px;
}

.composer-box {
    display: flex;
    align-items: center;
    flex: 1;
    min-width: 0;
    height: 99px;
    padding: 0 27px 0 28px;
    border-radius: 50px;
    background: #1f272a;
    color: #8d9598;
}

.sticker svg {
    width: 42px;
    height: 42px;
}

.message-input {
    flex: 1;
    min-width: 0;
    height: 56px;
    margin-left: 29px;
    border: none;
    outline: none;
    background: none;
    box-shadow: inset 4px 0 0 #fff;
    color: #eef2f4;
    font: inherit;
    font-size: 41px;
}

.message-input::placeholder {
    color: #8d9598;
    opacity: 1;
}

.clip svg {
    width: 28px;
    height: 42px;
}

.camera {
    margin-left: 66px;
}

.camera svg {
    width: 42px;
    height: 38px;
}

.mic {
    display: flex;
    align-items: center;
    justify-content: center;
    flex: none;
    width: 101px;
    height: 101px;
    border-radius: 50%;
    background: #fafafa;
    color: #0b1014;
}

.mic svg {
    width: 50px;
    height: 50px;
}

/* Navegação do sistema */
.system-nav {
    display: flex;
    align-items: center;
    justify-content: center;
    flex: none;
    height: 101px;
    background: #000;
    color: #b0b0b0;
}

.system-nav button {
    display: flex;
    justify-content: center;
    flex: 0 0 28%;
}

.system-nav svg {
    width: 36px;
    height: 36px;
}
```
